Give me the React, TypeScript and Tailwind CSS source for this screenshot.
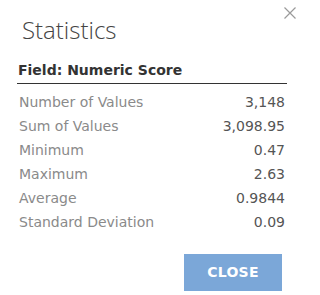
import React from "react";

const rows: [string, string][] = [
  ["Number of Values", "3,148"],
  ["Sum of Values", "3,098.95"],
  ["Minimum", "0.47"],
  ["Maximum", "2.63"],
  ["Average", "0.9844"],
  ["Standard Deviation", "0.09"],
];

export default function App() {
  return (
    <div className="relative w-[304px] h-[295px] bg-white overflow-hidden">
      <button className="absolute right-[8px] top-[7px] w-[12px] h-[12px] text-[#9a9a9a]">
        <svg viewBox="0 0 12 12" width="12" height="12" stroke="currentColor" strokeWidth="1.2" fill="none">
          <path d="M0.5 0.5L11.5 11.5M11.5 0.5L0.5 11.5" />
        </svg>
      </button>
      <div className="pl-[17px] pr-[17px] pt-[16px]">
        <h1 className="pl-[5px] h-[28px] text-[24px] leading-[28px] font-light text-[#444] font-['Open_Sans',sans-serif]">
          Statistics
        </h1>
        <div className="mt-[18px] pl-[1px] pb-[5px] border-b border-[#333] text-[14px] leading-[16px] font-bold text-[#333] font-['DejaVu_Sans',Verdana,sans-serif]">
          Field: Numeric Score
        </div>
        <div className="pt-[6px] pl-[2px] pr-[2px] font-['DejaVu_Sans',Verdana,sans-serif] text-[14px] leading-[24px]">
          {rows.map(([k, v]) => (
            <div key={k} className="flex justify-between">
              <span className="text-[#8a8a8a]">{k}</span>
              <span className="text-[#555]">{v}</span>
            </div>
          ))}
        </div>
        <div className="flex justify-end mt-[20px] pr-[5px]">
          <button className="w-[98px] h-[37px] bg-[#7ba7d8] text-white text-[14px] font-bold tracking-[0.3px] font-['DejaVu_Sans',Verdana,sans-serif]">
            CLOSE
          </button>
        </div>
      </div>
    </div>
  );
}
